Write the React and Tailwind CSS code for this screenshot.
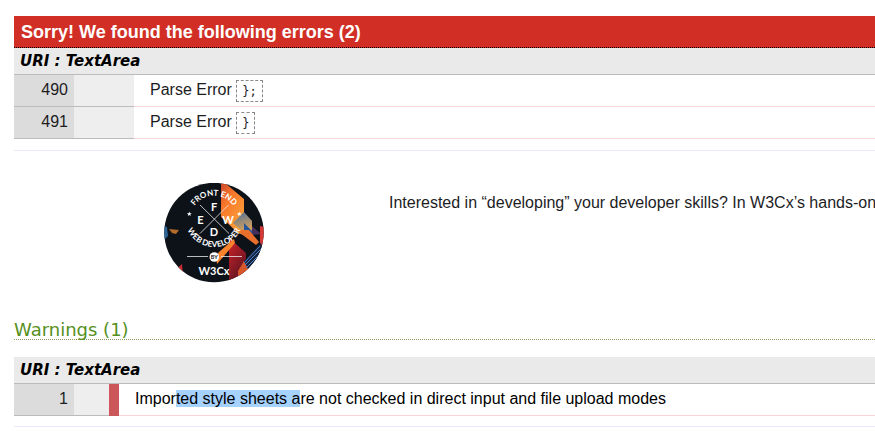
const body = "font-['Liberation_Sans',Arial,sans-serif]";

function Badge() {
  return (
    <svg viewBox="0 0 100 100" className="block size-[100px]" role="img" aria-label="Front End Web Developer by W3Cx">
      <defs>
        <clipPath id="disc"><circle cx="50" cy="49.5" r="49.7" /></clipPath>
        <linearGradient id="flame" x1="0" y1="0" x2="0.7" y2="1">
          <stop offset="0" stopColor="#c8452c" />
          <stop offset="0.35" stopColor="#f8762a" />
          <stop offset="1" stopColor="#fba43c" />
        </linearGradient>
        <linearGradient id="steel" x1="0" y1="0" x2="0.3" y2="1">
          <stop offset="0" stopColor="#4a6f9b" />
          <stop offset="1" stopColor="#d9a25a" />
        </linearGradient>
        <linearGradient id="ember" x1="0" y1="0" x2="0.6" y2="1">
          <stop offset="0" stopColor="#d3222a" />
          <stop offset="1" stopColor="#5c1420" />
        </linearGradient>
        <path id="top" d="M26.5 36 A23.5 23.5 0 0 1 73.5 36" />
        <path id="bottom" d="M21 35 A29 29 0 0 0 79 35" />
      </defs>
      <g clipPath="url(#disc)">
        <rect width="100" height="100" fill="#0d1219" />
        <path d="M57 0H61L80 16V52L74 50L57 34Z" fill="url(#flame)" />
        <path d="M69 40L80 29L88 38V50L80 50Z" fill="url(#steel)" />
        <path d="M80 40L89 49V57L80 50Z" fill="#24579a" />
        <path d="M88 43L97 51L88 52Z" fill="#43305c" />
        <path d="M96 43L100 44V66L96 60Z" fill="#d33a36" />
        <path d="M72 47H85L95 59L92 62Z" fill="#e9702c" />
        <path d="M65 55L82 70V90L65 99Z" fill="url(#ember)" />
        <path d="M74 88L80 78L86 84L82 94L74 99Z" fill="#d8572a" />
        <path d="M80 78L97 60L100 68L84 86Z" fill="#15233d" />
        <path d="M80 80L96 63M81 82L98 65M82 85L98 69" stroke="#4b83cc" strokeWidth="1" />
        <path d="M84 88L98 72V80L86 92Z" fill="#bb2033" />
        <path d="M52 73L55 69L70 56L71 60L60 73L53 81Z" fill="#f9822c" />
        <path d="M0 43L3 44L4 53L0 57Z" fill="#2d6599" />
        <path d="M5 46L15 47L12 51L8 50Z" fill="#b36a2b" />
        <path d="M9 89L18 81L19 92Z" fill="#c52a32" />
      </g>
      <path d="M36 22L65 50.5M64.5 22L36 50.5" stroke="#e8e8e8" strokeWidth="0.8" />
      <path d="M23 73.5H44M57 73.5H78" stroke="#e8e8e8" strokeWidth="0.8" />
      <g fill="#fff" className="font-['Lato',sans-serif] font-bold" textAnchor="middle">
        <g fontSize="11">
          <text x="50" y="28">F</text>
          <text x="36.5" y="40.5">E</text>
          <text x="64" y="40.5">W</text>
          <text x="50" y="53">D</text>
        </g>
        <g fontSize="8">
          <text><textPath href="#top" startOffset="50%">FRONT END</textPath></text>
          <text><textPath href="#bottom" startOffset="50%">WEB DEVELOPER</textPath></text>
        </g>
        <path d="M25.3 28.6L25.9 30.3H27.7L26.3 31.4L26.8 33.1L25.3 32L23.8 33.1L24.3 31.4L22.9 30.3H24.7ZM75.3 28.6L75.9 30.3H77.7L76.3 31.4L76.8 33.1L75.3 32L73.8 33.1L74.3 31.4L72.9 30.3H74.7Z" />
        <circle cx="50.3" cy="74" r="4.8" />
        <text x="50.3" y="76" fontSize="5.5" fill="#10151c">BY</text>
        <text x="50" y="92" fontSize="11">W3Cx</text>
      </g>
    </svg>
  );
}

function Source() {
  return (
    <caption className="h-[27px] border-b border-[#bcbcbc] bg-[#eaeaea] pl-[6px] text-left font-['DejaVu_Sans',Verdana,sans-serif] text-[15px] leading-[26px] font-bold italic text-black">
      URI : TextArea
    </caption>
  );
}

function ErrorRow({ line, code }) {
  return (
    <tr className="h-8">
      <td className="w-[60px] border-b border-[#bcbcbc] bg-[#dcdcdc] pr-[6px] text-right align-top leading-[30px]">{line}</td>
      <td className="w-[60px] border-b border-[#bcbcbc] bg-[#eee]"></td>
      <td className="border-b border-[#fad5d5] pl-4 align-top leading-[30px]">
        Parse Error{" "}
        <code className="border border-dashed border-[#888] px-[5px] py-[3px] font-['DejaVu_Sans_Mono',monospace] text-xs">{code}</code>
      </td>
    </tr>
  );
}

export default function App() {
  return (
    <main className={`${body} overflow-hidden bg-white pt-4 pl-[14px] text-base text-[#1d1d1f]`}>
      <section>
        <h2 className="h-8 border-b border-dotted border-black bg-[#d12f26] pl-[7px] text-lg leading-[32px] font-bold text-white">
          Sorry! We found the following errors (2)
        </h2>
        <table className="w-full border-separate border-spacing-0">
          <Source />
          <tbody>
            <ErrorRow line="490" code="};" />
            <ErrorRow line="491" code="}" />
          </tbody>
        </table>
      </section>
      <section className="mt-[11px] flex border-t border-[#ebe8fb] pt-8">
        <div className="w-[375px] shrink-0 pl-[150px]"><Badge /></div>
        <p className="pt-2 leading-6 whitespace-nowrap">
          Interested in “developing” your developer skills? In W3Cx’s hands-on
        </p>
      </section>
      <section className="pt-9">
        <h3 className="mb-[17px] h-[21px] border-b border-dotted border-[#8d9b5c] font-['DejaVu_Sans',Verdana,sans-serif] text-lg leading-[22px] text-[#55901c]">
          Warnings (1)
        </h3>
        <table className="w-full border-separate border-spacing-0">
          <Source />
          <tbody>
            <tr className="h-8">
              <td className="w-[60px] border-b border-[#bcbcbc] bg-[#dcdcdc] pr-[6px] text-right align-top leading-[30px]">1</td>
              <td className="w-[35px] border-b border-[#bcbcbc] bg-[#eee]"></td>
              <td className="w-[10px] bg-[#cc575b]"></td>
              <td className="border-b border-[#fad5d5] pl-4 align-top leading-[30px] text-black">
                Impor<mark className="bg-[#a6d2ff] text-black">ted style sheets a</mark>re not checked in direct input and file upload modes
              </td>
            </tr>
          </tbody>
        </table>
        <hr className="mt-[10px] border-[#ebe8fb]" />
      </section>
    </main>
  );
}
